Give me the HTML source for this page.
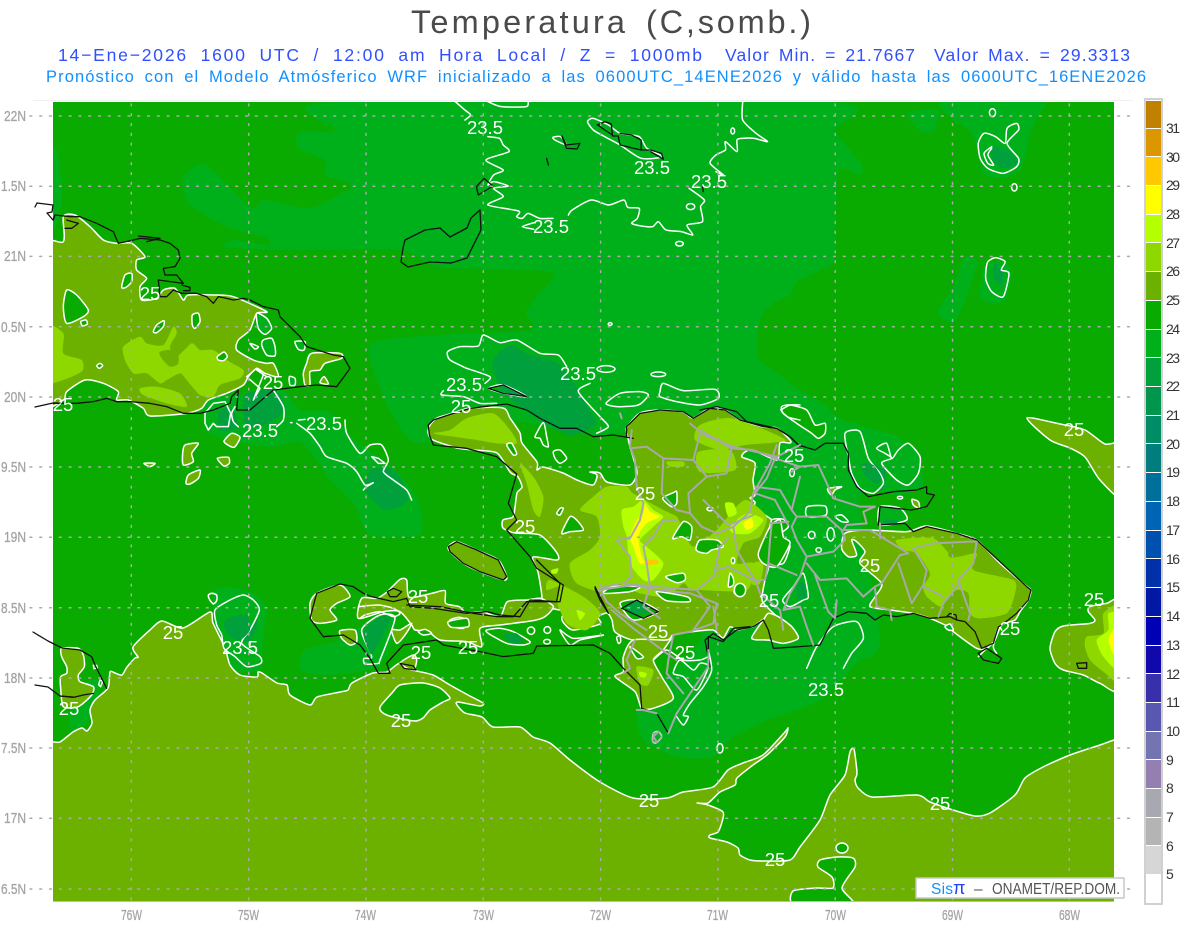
<!DOCTYPE html>
<html lang="es"><head><meta charset="utf-8"><title>Temperatura</title>
<style>
html,body{margin:0;padding:0;background:#fff}
svg{display:block}
svg *{vector-effect:non-scaling-stroke;stroke-linejoin:round;stroke-linecap:round}
text{font-family:"Liberation Sans",sans-serif}
.w{fill:none;stroke:#fff;stroke-width:1.5}
.k{fill:none;stroke:#111;stroke-width:1.3}
.g{fill:none;stroke:#a8a8a8;stroke-width:2}
.o{fill:#6cb100;stroke:#fff;stroke-width:1.5}
.h{fill:#0aab00;stroke:#fff;stroke-width:1.5}
.hl{fill:#00b01a;stroke:#fff;stroke-width:1.5}
.l{fill:#00b01a}
.d{fill:#00a03c}
.e{fill:#00964e}
.y1{fill:#8ed800}
.y2{fill:#b4ff00}
.y3{fill:#ffff00}
.y4{fill:#ffc800}
.lb{fill:#fff;font-size:18.5px}
.tk{fill:#a4a4a4;font-size:15px;font-family:"Liberation Mono",monospace;stroke:#a4a4a4;stroke-width:.3}
.lg{fill:#333;font-size:14px}
.grid{stroke:#aaa;stroke-width:1.5;stroke-dasharray:1.8 8;fill:none;stroke-linecap:butt}
</style></head><body>
<svg width="1200" height="927" viewBox="0 0 1200 927" xmlns="http://www.w3.org/2000/svg">
<defs><clipPath id="m"><rect x="53" y="102" width="1061" height="799"/></clipPath></defs>
<rect width="1200" height="927" fill="#fff"/>
<rect x="33" y="100" width="1100" height="1" fill="#f0f0f0"/>

<text x="411" y="33" font-size="32.5" textLength="214" lengthAdjust="spacing" fill="#4a4a4a">Temperatura</text>
<text x="646" y="33" font-size="32.5" textLength="165" lengthAdjust="spacing" fill="#4a4a4a">(C,somb.)</text>
<text x="58" y="61" font-size="17.5" textLength="644" lengthAdjust="spacing" fill="#3050ff" style="word-spacing:6px">14−Ene−2026 1600 UTC / 12:00 am Hora Local / Z = 1000mb</text>
<text x="725" y="61" font-size="17.5" textLength="190" lengthAdjust="spacing" fill="#3050ff" style="word-spacing:3px">Valor Min. = 21.7667</text>
<text x="934" y="61" font-size="17.5" textLength="196" lengthAdjust="spacing" fill="#3050ff" style="word-spacing:3px">Valor Max. = 29.3313</text>
<text x="46" y="82" font-size="16.5" textLength="904" lengthAdjust="spacing" fill="#1090ff" style="word-spacing:4px">Pronóstico con el Modelo Atmósferico WRF inicializado a las 0600UTC_14ENE2026 y válido hasta las</text>
<text x="961" y="82" font-size="16.5" textLength="185" lengthAdjust="spacing" fill="#1090ff">0600UTC_16ENE2026</text>

<rect x="53" y="102" width="1061" height="800" fill="#a6e040"/>
<g clip-path="url(#m)">
<rect x="53" y="102" width="1061" height="800" fill="#0aab00"/>

<!-- 23-24 shading -->
<polygon class="l" points="330,102 831,102 835,130 850,150 862,165 860,175 838,172 835,257 820,270 796,282 790,295 773,303 760,320 758,357 780,375 800,390 825,405 843,420 900,438 920,467 922,487 900,495 860,500 880,640 858,662 820,700 767,720 733,737 713,757 680,757 643,740 640,700 700,640 730,520 680,425 628,432 600,436 560,430 500,420 440,440 410,440 385,400 370,345 440,335 530,330 526,313 536,297 551,272 440,267 400,250 285,250 225,247 235,240 268,245 265,237 230,228 190,205 183,178 205,165 250,207 265,200 310,208 352,186 326,176 325,160 298,148 300,132 335,130"/>
<polygon class="l" points="53,150 58,155 62,190 58,220 53,225"/>
<polygon class="l" points="205,400 230,395 280,388 300,410 330,412 355,440 395,470 418,500 420,535 370,535 355,505 330,480 320,465 300,442 270,447 230,440 205,430"/>
<polygon class="l" points="215,590 245,590 265,605 262,650 260,670 225,670 215,640"/>
<polygon class="l" points="942,102 1040,102 1040,113 1030,133 1022,167 1003,178 984,173 972,133 953,120"/>
<polygon class="l" points="907,113 938,110 934,130 924,133 915,125"/>
<polygon class="l" points="938,313 953,287 965,257 977,263 965,300 953,323"/>
<polygon class="l" points="980,297 984,267 1003,260 1011,273 1005,300 991,303"/>
<polygon class="l" points="340,640 385,610 395,625 380,665 330,675 300,670 305,650"/>
<polygon class="l" points="75,690 98,680 95,715 70,730"/>

<!-- 22-23 shading -->
<polygon class="d" points="493,360 510,345 530,355 560,365 590,410 595,425 570,435 540,420 505,395 495,375"/>
<polygon class="d" points="232,612 250,605 258,620 250,640 232,640 225,625"/>
<polygon class="d" points="245,395 275,390 285,410 265,425 245,425"/>
<polygon class="d" points="218,412 232,408 238,428 220,430"/>
<polygon class="d" points="370,470 395,470 408,500 385,510 365,490"/>
<polygon class="d" points="862,462 885,470 882,490 862,485"/>
<polygon class="d" points="992,147 1008,150 1018,163 1003,168 992,160"/>
<polygon class="d" points="994,263 1003,270 1002,285 994,278"/>

<!-- 25-26 bottom sea region -->
<polygon class="o" points="53,742 60,742 73,732 82,728 87,731 92,723 90,710 95,700 108,688 110,672 115,673 122,675 127,667 135,658 138,657 133,647 150,630 162,621 183,628 210,612 213,623 225,648 230,665 240,675 257,677 258,672 262,673 277,683 287,685 290,695 310,705 317,697 340,692 348,690 352,683 373,673 387,672 400,663 413,670 433,675 450,685 468,695 483,703 480,706 458,702 457,705 465,713 482,717 493,727 520,727 533,737 550,743 570,760 600,782 633,798 667,798 683,792 713,787 728,770 743,763 763,755 785,732 788,728 785,737 767,755 753,765 737,778 735,785 720,792 708,803 697,803 708,805 723,812 722,822 718,832 710,835 710,838 727,842 738,848 740,855 750,860 763,861 790,860 800,847 820,820 830,795 845,775 850,752 854,749 857,773 855,780 858,788 872,797 917,795 930,802 953,810 975,816 990,813 1015,795 1025,778 1043,767 1070,755 1100,745 1114,740 1130,735 1130,920 40,920 40,745"/>
<polygon class="h" points="380,707 392,693 400,685 423,683 440,688 450,698 443,702 430,710 423,718 415,721 393,717 383,713"/>
<polygon class="h" points="793,891 817,888 833,888 832,877 818,867 820,860 837,857 853,858 855,867 842,888 853,905 795,905"/>
<ellipse class="h" cx="842" cy="848" rx="6" ry="5"/>
<g transform="translate(40 560) scale(.33333)">
<polygon class="o" points="65,265 115,265 130,285 133,320 115,345 120,365 160,380 155,405 115,440 70,440 62,385 62,350 80,340 80,320 65,290"/>
<polygon class="hl" points="525,150 570,120 610,105 640,120 658,150 630,210 605,250 660,290 662,310 620,320 585,290 552,265 545,225 530,195"/>
<polygon class="d" points="575,170 620,165 630,210 600,240 570,230 550,190"/>
<path class="w" d="M505,105 Q515,95 530,105 Q535,125 520,132 Q510,125 505,110Z"/>
<path class="w" d="M160,316 l10,0 l2,8 l-10,2Z M180,360 l8,4 l-6,16 l-6,-6Z"/>
</g>

<!-- Far right blob -->
<g transform="translate(1040 500) scale(.33333)">
<polygon class="o" points="240,310 200,310 150,320 145,335 165,360 150,370 70,378 45,395 30,445 45,490 70,510 130,525 180,550 240,565"/>
<polygon class="y1" points="140,410 190,400 190,340 240,325 240,540 190,515 150,480 135,440"/>
<polygon class="y2" points="170,420 205,390 205,340 240,350 240,510 190,470"/>
<polygon class="y3" points="205,420 222,385 240,385 240,470 222,465"/>
<polygon class="k" points="110,490 140,488 140,505 115,505"/>
</g>
<polygon class="o" points="1027,418 1060,424 1085,430 1105,444 1125,445 1125,500 1100,480 1085,457 1070,448 1050,440"/>

<!-- Cuba -->
<g transform="translate(0 200) scale(.33333)">
<polygon class="o" points="120,150 190,125 190,50 225,45 270,80 310,120 350,130 395,130 435,170 410,180 410,210 440,235 420,260 425,300 470,295 490,270 525,265 550,300 565,285 640,285 700,290 800,335 770,340 750,390 715,420 710,450 760,480 800,490 820,490 835,530 795,520 770,505 745,530 730,555 680,580 625,600 605,625 560,640 450,648 430,625 385,600 350,600 355,575 310,550 255,540 200,575 190,600 120,600"/>
<polygon class="y1" points="140,380 190,400 190,460 245,480 245,515 175,545 140,540"/>
<polygon class="y1" points="370,440 420,410 440,430 490,435 520,380 530,400 510,440 530,470 575,430 600,450 640,450 680,480 730,510 720,535 660,555 640,590 600,585 560,540 540,520 500,540 480,550 440,520 400,520 375,480"/>
<polygon class="y1" points="420,565 470,560 540,580 560,620 500,610 430,585"/>
<polygon class="o" style="stroke:none" points="480,455 530,450 535,490 510,500 485,475"/>
<polygon class="h" points="200,270 230,285 265,330 250,350 200,370 190,320"/>
<polygon class="h" points="365,262 375,225 395,220 395,245 378,262"/>
<polygon class="h" points="460,395 470,375 492,362 490,380 470,398"/>
<polygon class="h" points="577,345 595,340 600,365 585,385 577,375"/>
<polygon class="h" points="652,470 672,456 682,470 670,482 655,480"/>
<polygon class="h" points="242,365 258,360 262,372 248,378"/>
<polygon class="h" points="290,497 300,490 308,497 298,505"/>
<polygon class="o" points="935,460 1020,460 1025,475 975,490 960,510 930,515 930,555 915,555 910,520 920,490"/>
<polygon class="o" points="960,548 972,530 985,552"/>
<polygon class="o" points="555,735 595,730 575,760 580,785 550,795 548,760"/>
<polygon class="o" points="558,850 565,825 600,810 595,835 570,852"/>
<polygon class="o" points="672,725 695,700 720,712 702,742"/>
<polygon class="o" points="652,775 685,772 688,790 672,798"/>
<polygon class="o" points="432,790 465,790 450,800"/>
<polygon class="hl" points="770,340 800,355 815,385 795,403 775,385"/>
<polygon class="hl" points="790,420 815,415 825,440 825,467 800,465 785,435"/>
<polygon class="hl" points="885,425 915,425 912,450 895,448"/>
<polygon class="hl" points="868,530 885,535 885,555 870,555"/>
<polygon class="hl" points="750,430 775,440 765,447"/>
<path class="w" d="M615,640 L640,610 L675,605 L692,640 L685,680 L650,680 L640,670 L625,690 L615,670Z M770,510 L800,530 M740,530 L770,505 L790,525 L760,600 L780,565 Z"/>
<polyline class="w" points="820,570 850,620 850,660 830,680"/>
<polyline class="w" points="705,620 695,640 700,665 715,680"/>
<polyline class="w" points="890,670 930,700 960,740 980,770 1040,790 1070,815 1095,855 1120,848 1100,860 1090,870"/>
<polyline class="w" points="1035,660 1040,700 1080,760 1110,735 1145,735 1165,780 1150,815 1180,840 1220,870 1235,900"/>
<path class="w" d="M1115,770 L1135,775 L1155,790 L1135,790Z M895,660 L915,658 M872,668 l4,0"/>
</g>

<!-- Hispaniola main olive -->
<polygon class="o" points="430,425 437,418 453,413 470,408 503,408 510,418 520,433 522,443 537,462 537,470 543,467 563,473 577,480 593,485 597,475 590,472 600,473 607,482 630,485 637,473 633,457 630,447 627,433 627,427 640,413 660,410 683,412 693,418 710,408 725,410 740,420 763,427 777,428 790,440 790,443 780,443 777,460 753,450 745,452 742,457 755,463 753,480 755,495 750,498 755,502 755,508 772,520 770,525 767,547 760,553 768,563 768,570 765,580 762,600 770,610 778,617 783,620 792,627 798,638 783,643 768,640 752,638 763,620 753,627 750,627 738,630 730,627 723,638 713,630 690,632 673,635 667,640 633,640 615,632 612,620 607,613 598,617 600,624 573,630 563,622 562,617 567,609 560,610 545,608 540,617 542,598 538,572 533,557 557,560 557,553 540,535 515,533 503,528 503,520 513,517 515,507 517,493 522,487 518,477 510,472 497,453 473,450 457,448 433,440 428,433"/>
<g transform="translate(300 560) scale(.33333)">
<!-- Tiburon -->
<polygon class="o" points="50,100 120,75 150,110 110,130 90,150 110,180 60,190 35,180 30,130"/>
<polygon class="o" points="175,175 185,115 230,115 262,95 300,58 320,60 328,112 395,100 435,92 437,130 478,140 500,160 545,155 600,170 622,125 680,120 722,115 760,140 735,170 700,182 600,195 540,205 545,260 500,245 420,240 385,215 345,210 335,195 300,155 250,155"/>
<polygon class="o" points="120,212 165,210 170,245 150,255 125,235"/>
<polygon class="o" points="275,210 300,210 335,190 315,225 290,250"/>
<!-- Pedernales -->
<polygon class="o" points="945,350 970,335 970,290 1000,240 1100,240 1120,225 1090,270 1060,300 1085,350 1120,415 1060,445 1025,445 1005,395"/>
<polygon class="y1" points="1010,320 1060,330 1045,375 1020,370"/>
<polygon class="y2" points="1018,335 1040,340 1035,352 1020,350"/>
<polygon class="o" points="300,310 340,330 350,300 340,285"/>
<!-- southwest greens -->
<polygon class="hl" points="185,210 240,165 285,175 240,300 235,310 195,312 192,295 215,290"/>
<polygon class="d" points="190,215 240,172 270,178 225,270 210,280"/>
<polygon class="h" points="450,180 480,172 505,185 490,205 460,200"/>
<polygon class="h" points="355,215 375,208 395,220 370,225"/>
<polygon class="h" points="560,210 600,205 640,215 690,245 670,255 620,250 565,220"/>
<polygon class="d" points="610,225 650,220 670,245 630,248"/>
<circle class="h" cx="693" cy="212" r="11"/>
<circle class="h" cx="742" cy="210" r="10"/>
<ellipse class="h" cx="741" cy="245" rx="10" ry="7"/>
<polygon class="h" points="780,210 820,235 910,225 840,240 810,255"/>
<polygon class="h" points="950,232 960,228 962,245 955,250"/>
<polygon class="h" points="990,260 1030,290 1010,295"/>
<polyline class="w" points="175,140 235,135 280,145 300,160 280,170 240,155 195,165 180,175"/>
<polygon class="w" points="1120,340 1140,300 1180,330 1200,310 1225,320 1190,390 1150,350"/>
<polyline class="w" points="1060,300 1100,270 1150,300 1200,300 1225,290"/>
<polyline class="w" points="1225,270 1235,330 1210,380 1170,430 1150,465 1165,470 1150,495 1130,470"/>
<polygon class="hl" points="1060,520 1075,515 1085,530 1070,548 1058,545"/>
<ellipse class="w" cx="1260" cy="565" rx="9" ry="14"/>
</g>

<!-- East DR -->
<g transform="translate(700 400) scale(.33333)">
<polygon class="o" points="435,400 500,390 620,395 680,378 770,400 830,420 900,490 975,555 993,570 985,600 960,635 945,660 905,675 885,720 860,745 830,745 760,695 745,680 690,655 640,640 570,630 510,620 525,590 545,550 480,490 495,455 470,425 455,420 470,465 445,470 425,445"/>
<polygon class="y1" points="590,420 700,415 760,470 830,460 820,510 940,540 945,580 920,640 840,655 810,640 805,580 770,570 740,600 720,620 680,590 670,560 690,520 650,460 610,450"/>
<polygon class="o" style="stroke:none" points="745,460 770,455 775,470 750,472"/>
<polygon class="h" points="245,20 270,15 320,30 345,75 375,70 375,100 355,115 335,100 290,70 250,40"/>
<polygon class="hl" points="435,100 480,95 505,175 540,220 550,250 520,280 480,265 455,220 445,170"/>
<polygon class="d" points="485,190 520,195 545,235 525,250 495,225"/>
<polygon class="hl" points="530,145 560,130 575,175 595,150 625,130 660,170 655,220 625,255 590,240 545,190 575,175 555,160"/>
<polygon class="o" points="385,265 425,260 405,270 395,285 385,275"/>
<polygon class="hl" points="540,320 600,325 620,360 540,375"/>
<polygon class="d" points="550,360 590,360 590,370 555,372"/>
<polygon class="o" points="636,298 655,305 658,325 640,315"/>
<ellipse class="h" cx="600" cy="293" rx="8" ry="4"/>
<polygon class="w" points="322,320 375,318 378,345 335,352 318,345"/>
<polygon class="w" points="405,350 425,345 445,365 425,365"/>
<ellipse class="w" cx="335" cy="405" rx="10" ry="11"/>
<ellipse class="w" cx="392" cy="403" rx="11" ry="20"/>
<ellipse class="w" cx="356" cy="450" rx="8" ry="7"/>
<ellipse class="w" cx="276" cy="218" rx="7" ry="12"/>
<polygon class="h" points="177,460 205,420 240,470 260,435 270,440 250,490 210,490"/>
<polygon class="h" points="215,360 250,358 265,380 240,400 215,400"/>
<polygon class="hl" points="280,560 310,520 325,590 310,600 270,620 248,600"/>
<polygon class="d" points="290,560 310,545 320,590 295,600"/>
<polygon class="o" points="155,715 190,660 205,640 235,650 275,680 295,715 250,730 205,720"/>
<ellipse class="w" cx="118" cy="570" rx="17" ry="18"/>
<ellipse class="w" cx="30" cy="327" rx="8" ry="5"/>
<polygon class="w" points="92,520 86,550 96,555"/>
<polygon class="w" points="99,475 105,479 103,491 97,487"/>
<polyline class="w" points="835,770 860,745"/>
<polyline class="w" points="905,690 895,680 880,740 890,760"/>
<polygon class="hl" points="735,680 750,672 760,690 745,690"/>
<polyline class="w" points="320,805 350,740 400,680 470,665 490,715 455,760 430,805"/>
</g>

<!-- Hispaniola interior colours -->
<polygon class="y1" points="700,425 730,418 770,432 785,441 745,445 720,450 695,440"/>
<polygon class="y1" points="698,452 730,450 735,470 700,472"/>
<g transform="translate(400 330) scale(.33333)">
<polygon class="y1" points="620,470 680,470 700,490 790,540 830,560 850,600 880,650 950,600 1000,540 1040,510 1100,560 1080,620 1030,640 1010,700 1060,700 1040,780 900,780 870,780 850,760 800,800 720,790 650,760 620,790 530,760 510,700 570,660 600,620 590,560 540,540 580,500"/>
<polygon class="y1" points="100,310 150,300 200,265 280,250 330,300 350,340 290,340 230,330 160,320"/>
<polygon class="y1" points="360,400 400,440 430,500 420,560 400,540 380,460"/>
<polygon class="y1" points="440,780 480,770 470,810 500,880 560,900 600,850 550,800 450,750"/>
<polygon class="y2" points="665,540 700,530 730,510 760,540 790,560 760,590 720,630 740,650 790,700 760,750 730,750 690,700 680,620 670,590"/>
<polygon class="y3" points="735,520 750,545 780,560 740,580 715,620 730,690 760,690 720,700 700,650 690,620 710,570 730,550"/>
<polygon class="y4" points="735,690 770,690 775,700 740,705"/>
<polygon class="y2" points="990,590 1040,550 1090,570 1050,610 1000,610"/>
<polygon class="y3" points="1030,580 1055,565 1060,590 1040,600"/>
<polygon class="y2" points="975,520 1000,520 1010,550 985,560"/>
<polygon class="y2" points="455,720 475,715 470,730 455,730"/>
<polygon class="y2" points="530,840 555,850 540,870"/>
<polygon class="y1" points="1060,700 1090,700 1080,760 1055,760"/>
<polygon class="y1" points="800,395 850,395 850,410 810,410"/>
<polygon class="h" points="320,345 335,340 350,370 340,375"/>
<polygon class="h" points="460,365 480,360 500,385 480,400 465,385"/>
<polygon class="h" points="470,550 480,535 490,535 480,555"/>
<polygon class="h" points="485,610 510,560 530,570 550,600 510,605"/>
<polygon class="h" points="788,505 820,488 830,485 830,520 815,530"/>
<polygon class="h" points="818,625 850,575 875,590 870,630 845,620"/>
<polygon class="h" points="888,655 900,630 950,630 970,650 935,660 920,670 895,665"/>
<polygon class="h" points="797,740 850,730 855,750 830,758"/>
<polygon class="h" points="770,785 860,800 868,815 800,812"/>
<ellipse class="h" cx="930" cy="537" rx="9" ry="5"/>
<ellipse class="h" cx="999" cy="692" rx="5" ry="9"/>
<ellipse class="h" cx="1020" cy="780" rx="17" ry="20"/>
<polygon class="h" points="985,770 990,730 1000,745 1000,765"/>
<polygon class="h" points="1075,670 1110,590 1140,570 1150,620 1170,640 1130,710 1090,700"/>
<polygon class="h" points="660,820 710,810 775,845 700,870"/>
<polygon class="h" points="610,790 640,770 720,770 690,785"/>
<polygon class="d" points="675,825 730,815 745,845 700,855"/>
<polygon class="h" points="145,875 200,865 205,890 155,892"/>
<polygon class="w" points="405,320 430,278 440,320 445,350 430,345 420,325"/>
<ellipse class="w" cx="618" cy="117" rx="27" ry="10"/>
<ellipse class="w" cx="775" cy="133" rx="22" ry="7"/>
<polygon class="w" points="618,220 660,190 720,185 745,195 715,225 650,230"/>
<polygon class="w" points="780,185 790,160 850,182 945,178 955,205 900,225 830,215 780,200"/>
<polyline class="w" points="1142,240 1170,225 1200,225"/>
<polyline class="w" points="1145,245 1165,262 1200,270"/>
<!-- Inagua contour -->
<polyline class="w" points="200,115 150,90 143,65 180,50 235,48 250,15 300,38 350,30 420,70 475,75 500,110"/>
<polyline class="w" points="200,115 270,140 255,160"/>
<polyline class="w" points="570,160 535,185 600,260 625,290 590,310"/>
<polyline class="w" points="130,182 125,195 190,200 240,220 290,220"/>
<polygon class="o" points="145,650 170,635 230,660 295,690 320,740 310,750 240,725 190,700 150,665"/>
<polygon class="w" points="265,175 310,165 380,200 310,190"/>
</g>

<!-- Contours top -->
<g transform="translate(440 100) scale(.38314 .33333)">
<polyline class="w" points="40,5 65,30 80,45 65,60"/>
<polyline class="w" points="125,110 155,115 165,135 180,155 120,180 165,210 140,225 125,255 140,245 178,258 140,265 165,290 125,315 205,333 200,350 215,355 230,340 260,355 295,355"/>
<polyline class="w" points="245,368 215,380 245,388"/>
<polyline class="w" points="335,345 345,330 395,300 440,315 480,300 490,322 520,325 515,355 500,370 525,378 555,380 570,365 590,390 630,395 660,405 645,375 685,365 680,320 690,300 650,265"/>
<polyline class="w" points="720,215 740,225 705,190 720,165 745,150 745,125 775,155 775,120 790,115 820,115 855,125 825,100 790,60 790,5"/>
<ellipse class="w" cx="654" cy="320" rx="11" ry="9"/>
<ellipse class="w" cx="625" cy="431" rx="10" ry="7"/>
<ellipse class="w" cx="764" cy="93" rx="5" ry="9"/>
<ellipse class="w" cx="444" cy="672" rx="5" ry="4"/>
<polygon class="w" points="385,65 400,55 440,75 470,100 520,110 540,145 580,170 525,175 470,135 430,110 400,90"/>
<polyline class="w" points="125,5 160,20 225,20 230,5"/>
<polygon class="w" points="295,112 315,110 330,135 300,120"/>
<polygon class="w" points="1405,130 1420,100 1450,110 1475,130 1480,85 1505,70 1510,90 1480,130 1510,175 1505,200 1470,220 1430,205 1410,175"/>
<polyline class="w" points="1440,140 1420,160 1430,190 1445,195 1430,165 1440,145"/>
<ellipse class="w" cx="1442" cy="38" rx="8" ry="12"/>
<ellipse class="w" cx="1499" cy="262" rx="7" ry="11"/>
<polygon class="w" points="1425,510 1430,485 1450,473 1475,485 1465,510 1485,520 1470,590 1440,575 1425,540"/>
<!-- black islands -->
<polygon class="k" points="95,260 115,235 138,258 100,285"/>
<polyline class="k" points="410,75 430,65 447,72 450,108 465,108 470,135 525,150 525,120 500,105 470,100"/>
<polygon class="k" points="412,75 430,65 447,72 450,105 430,90"/>
<polyline class="k" points="525,150 550,150 578,160 583,178 550,155"/>
<polyline class="k" points="318,108 330,135 365,130 358,147 330,145 318,108"/>
<polyline class="k" points="278,175 283,195"/>
<polyline class="k" points="685,255 687,275"/>
</g>
<polygon class="k" points="440,228 450,237 467,228 471,218 480,210 481,230 467,258 451,263 430,262 408,267 401,262 403,248 405,240 425,230"/>

<!-- Coasts Cuba -->
<g transform="translate(0 200) scale(.33333)">
<polyline class="k" points="160,60 165,45 210,50 240,50 290,70 340,95 355,130 400,120 420,115 480,120 510,130 535,150 540,175 525,200 490,205 495,225 530,225 550,250 475,240 480,290 500,290 520,270 545,280 590,280 620,290 640,310 655,290 680,295 700,300 730,295 750,300 790,320 835,330 840,350 900,410 920,440 1000,465 1030,470 1050,505 1010,560 950,555 900,560 820,570 750,630 710,630 715,570 695,590 690,610 640,630 600,640 550,640 500,620 450,610 390,605 350,605 320,595 280,605 230,610 160,610"/>
<polyline class="k" points="200,60 235,70 215,85 195,85"/>
<polyline class="k" points="545,255 570,262 570,272 550,272"/>
<polyline class="k" points="415,108 480,115 440,125"/>
</g>
<!-- Coasts Hispaniola north/haiti -->
<g transform="translate(400 330) scale(.33333)">
<polyline class="k" points="85,285 100,270 160,250 210,235 320,222 380,240 420,265 480,295 530,295 580,320 640,315 700,325"/>
<polyline class="k" points="680,320 680,290 720,250 780,240 850,245 880,265 930,235 975,240 1020,270 1090,290 1130,295 1170,320 1200,350"/>
<polyline class="k" points="90,320 100,345 200,355 290,380 350,432 325,520 350,570 320,600 390,680 410,715 490,765 480,815 380,815 340,860 290,860 220,850 120,830 20,825"/>
<polygon class="k" points="145,650 170,635 230,660 295,690 320,740 310,750 240,725 190,700 150,665"/>
<polygon class="k" points="265,175 310,165 380,200 310,190"/>
<polyline class="k" points="85,285 88,315 92,325"/>
</g>
<!-- Coasts DR -->
<g transform="translate(700 400) scale(.33333)">
<polyline class="k" points="0,30 50,20 110,35 140,65 230,85 270,110 295,135 345,150 375,130 430,130 445,160 445,210 470,260 505,290 580,275 650,270 680,260 680,280 703,285 680,320 635,330 540,320 535,375 615,370 640,395 680,380 770,400 830,420 980,560 993,570 985,600 950,640 905,675 895,680 880,730 845,745 825,695 795,665 770,660 750,650 690,655 640,640 590,650 550,645 525,660 500,640 445,635 400,655 360,735 300,740 220,745 205,690 190,660 160,680 110,690 70,720 40,700 15,720 30,800"/>
<polygon class="k" points="835,760 860,745 905,775 895,790 850,780"/>
<polyline class="k" points="740,650 750,640 768,645 770,660"/>
</g>
<!-- Coasts south -->
<g transform="translate(300 560) scale(.33333)">
<polyline class="k" points="30,175 50,100 120,72 160,80 190,100 215,110 280,125 320,115 330,140 400,145 500,160 560,155 600,165 660,170 690,120 770,125 780,70 710,0"/>
<polyline class="k" points="30,175 70,230 130,225 180,255 210,295 235,340 270,340 260,310 310,255 410,240 430,255 540,275 610,290 700,280 710,258 880,255 930,280 970,325 1020,375 1025,445 1070,460 1105,520 1130,460 1225,320 1225,230 1270,245 1300,205 1350,200"/>
<polygon class="k" points="262,95 280,85 305,95 290,110 270,110"/>
<polygon class="k" points="300,310 340,318 348,330 312,325"/>
<polyline class="k" points="885,80 925,160 900,120 885,85"/>
<polygon class="k" points="965,145 1010,120 1075,155 1030,175"/>
<polygon class="g" style="stroke-width:1.4;fill:none" points="1060,520 1075,515 1085,530 1070,548 1058,545"/>
</g>
<!-- Jamaica-side coast -->
<g transform="translate(40 560) scale(.33333)">
<polyline class="k" points="120,270 155,290 165,315 180,345 200,385"/>
<polyline class="k" points="60,408 100,412 130,405 160,400"/>
</g>

<!-- Political borders -->
<g transform="translate(400 330) scale(.33333)">
<polyline class="g" points="695,300 690,350 705,390 710,470 730,520 720,570 690,625 650,630 690,680 695,740 670,760"/>
<polyline class="g" points="690,355 740,350 790,385 880,390 900,310 1000,350 1130,380 1200,345"/>
<polyline class="g" points="870,280 900,305"/>
<polyline class="g" points="790,385 785,490 830,540 870,550 865,490 920,440 980,430 995,350"/>
<polyline class="g" points="920,440 880,390"/>
<polyline class="g" points="870,550 905,590 950,610 1000,590 1050,545 1060,490 1110,400 1130,345"/>
<polyline class="g" points="1000,590 1010,660 1070,760 1080,790 1140,840 1150,900"/>
<polyline class="g" points="830,570 790,570 760,620 730,650 740,700 750,770 730,830 780,865"/>
<polyline class="g" points="670,760 760,770 890,780 940,740 960,650 985,625"/>
<polyline class="g" points="600,775 660,760"/>
<polyline class="g" points="600,775 620,815 660,850 740,900"/>
<polyline class="g" points="890,780 930,830 880,900"/>
<polyline class="g" points="940,830 950,900"/>
<polyline class="g" points="660,250 665,265"/>
</g>
<g transform="translate(700 400) scale(.33333)">
<polyline class="g" points="0,90 95,145 160,150 225,175 300,200 355,195 385,260 400,295 480,320 525,320 490,335 500,370"/>
<polyline class="g" points="225,175 200,235 165,280 225,300 265,375"/>
<polyline class="g" points="275,215 300,200"/>
<polyline class="g" points="300,230 275,330 290,350 380,350 425,390 435,420 400,455 320,470 290,420 275,380 290,350"/>
<polyline class="g" points="165,260 240,270 275,330"/>
<polyline class="g" points="320,470 300,530 270,580 250,630 300,620 320,680 340,735"/>
<polyline class="g" points="320,490 360,540 440,535 490,590 525,560 545,550 600,465 625,460 510,390 430,390"/>
<polyline class="g" points="210,370 265,365"/>
<polyline class="g" points="215,370 210,420 205,490 290,525"/>
<polyline class="g" points="595,490 635,610 670,555 680,510 640,445 700,430 810,425 830,425 820,490 775,540 810,640 805,660"/>
<polyline class="g" points="775,555 730,610 715,650"/>
<polyline class="g" points="670,560 730,590"/>
<polyline class="g" points="525,565 530,620 570,630 575,660"/>
<polyline class="g" points="345,525 385,635 405,655 410,600"/>
<polyline class="g" points="205,490 195,540 160,540 85,500 50,510"/>
<polyline class="g" points="10,300 85,375 160,345"/>
<polyline class="g" points="540,370 540,415"/>
<polyline class="g" points="430,390 440,375 500,370"/>
</g>
<g transform="translate(300 560) scale(.33333)">
<polyline class="g" points="895,90 1000,75 1070,90 1170,100 1250,130 1240,190 1170,215 1120,225 1105,300 1100,340 1150,400"/>
<polyline class="g" points="935,150 1000,205 1100,280 1130,300"/>
<polyline class="g" points="1005,240 980,300 990,325 970,340"/>
<polyline class="g" points="1105,520 1130,460 1225,320 1225,270"/>
<polyline class="g" points="1010,450 1030,450 1070,460"/>
<polyline class="g" points="1070,545 1060,530 1075,515"/>
</g>

<!-- Contour labels -->
<g text-anchor="middle">
<text class="lb" x="485" y="134">23.5</text><text class="lb" x="652" y="174">23.5</text><text class="lb" x="709" y="188">23.5</text><text class="lb" x="551" y="233">23.5</text><text class="lb" x="464" y="391">23.5</text><text class="lb" x="578" y="380">23.5</text><text class="lb" x="260" y="437">23.5</text><text class="lb" x="324" y="430">23.5</text><text class="lb" x="240" y="654">23.5</text><text class="lb" x="826" y="696">23.5</text>
<text class="lb" x="150" y="300">25</text><text class="lb" x="273" y="389">25</text><text class="lb" x="63" y="411">25</text><text class="lb" x="461" y="413">25</text><text class="lb" x="794" y="462">25</text><text class="lb" x="645" y="500">25</text><text class="lb" x="525" y="533">25</text><text class="lb" x="870" y="572">25</text><text class="lb" x="418" y="603">25</text><text class="lb" x="769" y="607">25</text><text class="lb" x="1010" y="635">25</text><text class="lb" x="658" y="638">25</text><text class="lb" x="685" y="659">25</text><text class="lb" x="421" y="659">25</text><text class="lb" x="468" y="654">25</text><text class="lb" x="173" y="639">25</text><text class="lb" x="1094" y="606">25</text><text class="lb" x="1074" y="436">25</text><text class="lb" x="69" y="715">25</text><text class="lb" x="401" y="727">25</text><text class="lb" x="649" y="807">25</text><text class="lb" x="940" y="810">25</text><text class="lb" x="775" y="866">25</text>
</g>
</g>

<!-- Coast fragments running past the map's left edge -->
<polyline class="k" points="35,207 37,203 53,205 52,212 47,213 53,220 55,215"/>
<polyline class="k" points="35,407 53,403 60,403"/>
<polyline class="k" points="33,632 48,641 62,648 80,650"/>
<polyline class="k" points="35,685 48,687 60,696 73,697"/>

<!-- Grid -->
<g class="grid">
<path d="M30 116H1133M30 186.3H1133M30 256.4H1133M30 326.7H1133M30 397H1133M30 467H1133M30 537.3H1133M30 607.7H1133M30 678H1133M30 748H1133M30 818.3H1133M30 889H1133"/>
<path d="M131.3 104V905M248.7 104V905M366 104V905M483.3 104V905M600.6 104V905M717.9 104V905M835.2 104V905M952.5 104V905M1069.3 104V905"/>
</g>

<!-- Axis labels -->
<g class="tk">
<text x="4" y="121" textLength="22" lengthAdjust="spacingAndGlyphs">22N</text><text x="1" y="191" textLength="25" lengthAdjust="spacingAndGlyphs">1.5N</text><text x="4" y="261" textLength="22" lengthAdjust="spacingAndGlyphs">21N</text><text x="1" y="332" textLength="25" lengthAdjust="spacingAndGlyphs">0.5N</text><text x="4" y="402" textLength="22" lengthAdjust="spacingAndGlyphs">20N</text><text x="1" y="472" textLength="25" lengthAdjust="spacingAndGlyphs">9.5N</text><text x="4" y="542" textLength="22" lengthAdjust="spacingAndGlyphs">19N</text><text x="1" y="613" textLength="25" lengthAdjust="spacingAndGlyphs">8.5N</text><text x="4" y="683" textLength="22" lengthAdjust="spacingAndGlyphs">18N</text><text x="1" y="753" textLength="25" lengthAdjust="spacingAndGlyphs">7.5N</text><text x="4" y="823" textLength="22" lengthAdjust="spacingAndGlyphs">17N</text><text x="1" y="894" textLength="25" lengthAdjust="spacingAndGlyphs">6.5N</text>
<text x="121" y="920" textLength="21" lengthAdjust="spacingAndGlyphs">76W</text><text x="238" y="920" textLength="21" lengthAdjust="spacingAndGlyphs">75W</text><text x="355" y="920" textLength="21" lengthAdjust="spacingAndGlyphs">74W</text><text x="473" y="920" textLength="21" lengthAdjust="spacingAndGlyphs">73W</text><text x="590" y="920" textLength="21" lengthAdjust="spacingAndGlyphs">72W</text><text x="707" y="920" textLength="21" lengthAdjust="spacingAndGlyphs">71W</text><text x="825" y="920" textLength="21" lengthAdjust="spacingAndGlyphs">70W</text><text x="942" y="920" textLength="21" lengthAdjust="spacingAndGlyphs">69W</text><text x="1059" y="920" textLength="21" lengthAdjust="spacingAndGlyphs">68W</text>
</g>

<!-- Credit box -->
<rect x="916" y="878" width="208" height="20" fill="#fff" stroke="#c8c8c8" stroke-width="1.5"/>
<text x="931" y="894" font-size="15.5" fill="#1090ff" textLength="22">Sis</text>
<text x="953" y="894" font-size="18" fill="#2040ff">π</text>
<text x="974" y="894" font-size="15.5" fill="#555">–</text>
<text x="992" y="894" font-size="15.5" fill="#555" textLength="128" lengthAdjust="spacingAndGlyphs">ONAMET/REP.DOM.</text>

<!-- Color bar -->
<rect x="1145" y="99" width="17" height="805" fill="#fff" stroke="#d0d0d0" stroke-width="2"/>
<g>
<rect x="1146" y="101" width="15" height="27" fill="#c08000"/>
<rect x="1146" y="129" width="15" height="27" fill="#dc9600"/>
<rect x="1146" y="157" width="15" height="28" fill="#ffc800"/>
<rect x="1146" y="186" width="15" height="28" fill="#ffff00"/>
<rect x="1146" y="215" width="15" height="27" fill="#b4ff00"/>
<rect x="1146" y="243" width="15" height="28" fill="#8ed800"/>
<rect x="1146" y="272" width="15" height="28" fill="#6cb100"/>
<rect x="1146" y="301" width="15" height="28" fill="#0aab00"/>
<rect x="1146" y="330" width="15" height="27" fill="#00b01a"/>
<rect x="1146" y="358" width="15" height="28" fill="#00a03c"/>
<rect x="1146" y="387" width="15" height="28" fill="#00964e"/>
<rect x="1146" y="416" width="15" height="27" fill="#008c64"/>
<rect x="1146" y="444" width="15" height="28" fill="#007e7e"/>
<rect x="1146" y="473" width="15" height="28" fill="#00709a"/>
<rect x="1146" y="502" width="15" height="28" fill="#0064b4"/>
<rect x="1146" y="531" width="15" height="27" fill="#0050b0"/>
<rect x="1146" y="559" width="15" height="28" fill="#0030aa"/>
<rect x="1146" y="588" width="15" height="28" fill="#0018a4"/>
<rect x="1146" y="617" width="15" height="28" fill="#0000b4"/>
<rect x="1146" y="646" width="15" height="27" fill="#1008aa"/>
<rect x="1146" y="674" width="15" height="28" fill="#3830aa"/>
<rect x="1146" y="703" width="15" height="28" fill="#5858b0"/>
<rect x="1146" y="732" width="15" height="27" fill="#7474b0"/>
<rect x="1146" y="760" width="15" height="28" fill="#9480b0"/>
<rect x="1146" y="789" width="15" height="28" fill="#a8a8b0"/>
<rect x="1146" y="818" width="15" height="27" fill="#b4b4b4"/>
<rect x="1146" y="846" width="15" height="28" fill="#d6d6d6"/>
</g>
<g class="lg">
<text x="1166" y="133" textLength="14">31</text><text x="1166" y="162" textLength="14">30</text><text x="1166" y="190" textLength="14">29</text><text x="1166" y="219" textLength="14">28</text><text x="1166" y="248" textLength="14">27</text><text x="1166" y="276" textLength="14">26</text><text x="1166" y="305" textLength="14">25</text><text x="1166" y="334" textLength="14">24</text><text x="1166" y="363" textLength="14">23</text><text x="1166" y="391" textLength="14">22</text><text x="1166" y="420" textLength="14">21</text><text x="1166" y="449" textLength="14">20</text><text x="1166" y="477" textLength="14">19</text><text x="1166" y="506" textLength="14">18</text><text x="1166" y="535" textLength="14">17</text><text x="1166" y="564" textLength="14">16</text><text x="1166" y="592" textLength="14">15</text><text x="1166" y="621" textLength="14">14</text><text x="1166" y="650" textLength="14">13</text><text x="1166" y="679" textLength="14">12</text><text x="1166" y="707" textLength="14">11</text><text x="1166" y="736" textLength="14">10</text><text x="1166" y="765">9</text><text x="1166" y="793">8</text><text x="1166" y="822">7</text><text x="1166" y="851">6</text><text x="1166" y="879">5</text>
</g>
</svg>
<script>
document.querySelectorAll('polygon,polyline').forEach(function(e){
  if(e.classList.contains('k')||e.classList.contains('g'))return;
  var p=[],L=e.points,i;
  for(i=0;i<L.numberOfItems;i++){var q=L.getItem(i);p.push([q.x,q.y]);}
  var n=p.length,c=e.tagName.toLowerCase()==='polygon',t=.12;
  if(n<3)return;
  function g(k){return c?p[(k+n)%n]:p[Math.max(0,Math.min(n-1,k))];}
  var d='M'+p[0][0]+' '+p[0][1],m=c?n:n-1;
  for(i=0;i<m;i++){
    var a=g(i-1),b=g(i),f=g(i+1),h=g(i+2);
    d+='C'+(b[0]+(f[0]-a[0])*t).toFixed(1)+' '+(b[1]+(f[1]-a[1])*t).toFixed(1)+' '+(f[0]-(h[0]-b[0])*t).toFixed(1)+' '+(f[1]-(h[1]-b[1])*t).toFixed(1)+' '+f[0]+' '+f[1];
  }
  if(c)d+='Z';
  var s=document.createElementNS('http://www.w3.org/2000/svg','path');
  s.setAttribute('d',d);
  s.setAttribute('class',e.getAttribute('class'));
  if(e.getAttribute('style'))s.setAttribute('style',e.getAttribute('style'));
  e.parentNode.replaceChild(s,e);
});
</script>
</body></html>
